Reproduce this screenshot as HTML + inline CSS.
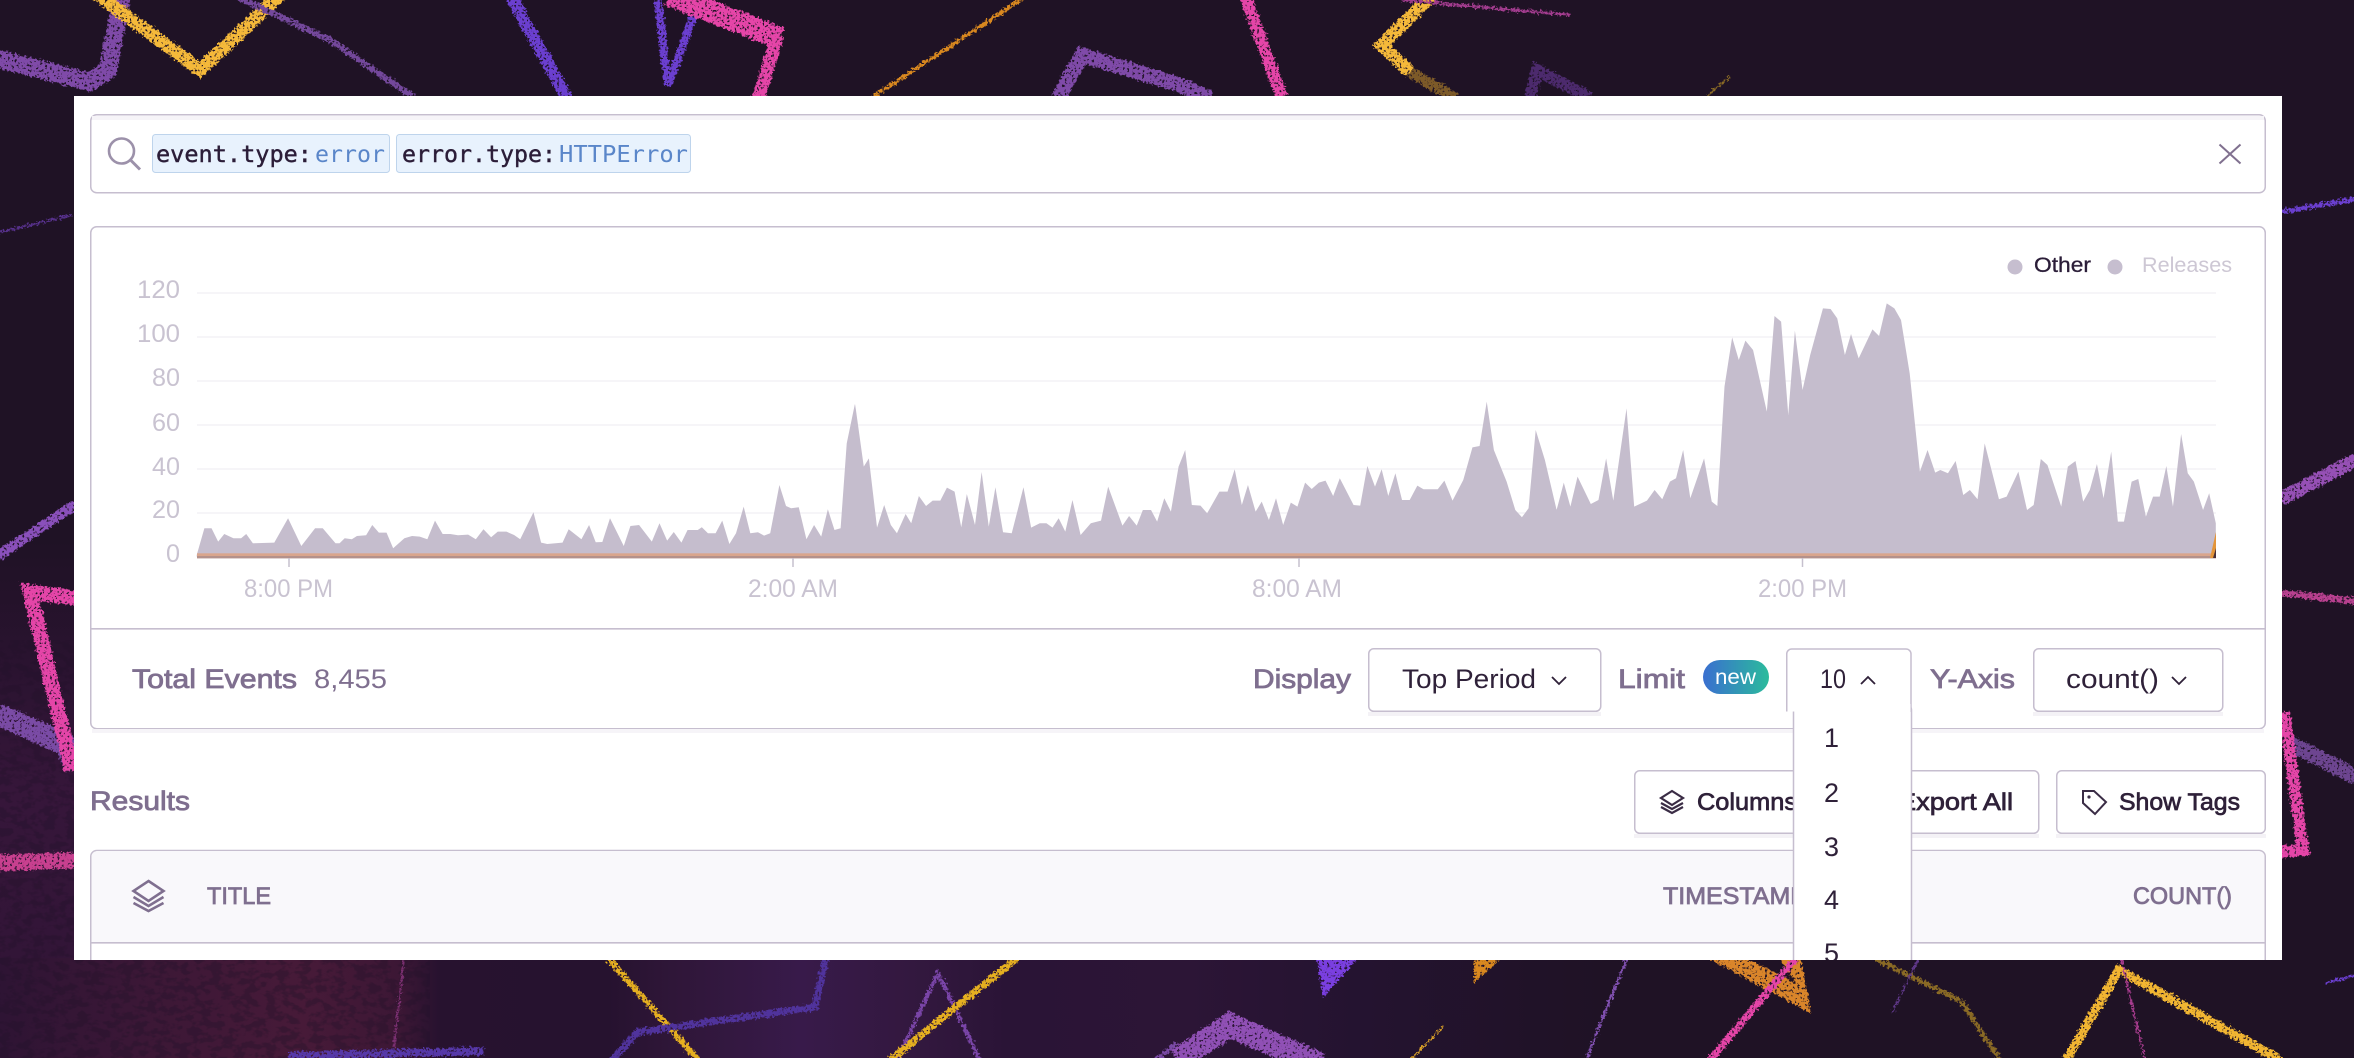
<!DOCTYPE html>
<html><head><meta charset="utf-8"><style>
html,body{margin:0;padding:0;background:#1f1225;width:2354px;height:1058px;overflow:hidden}
svg{display:block}
text{font-family:"Liberation Sans",sans-serif}
.m{font-family:"DejaVu Sans Mono","Liberation Mono",monospace;font-size:23px}
.d{stroke:#2b1d38;stroke-width:.4}
.lab{fill:#7f6f8f;stroke:#7f6f8f;stroke-width:.8;font-size:27px}
.val{fill:#2f2139;font-size:27px}
.btn{fill:#2f2139;stroke:#2f2139;stroke-width:.7;font-size:24px}
.ax{fill:#c9c3d1;font-size:25px}
.th{fill:#7f6f8f;stroke:#7f6f8f;stroke-width:.8;font-size:24px}
</style></head><body>
<svg width="2354" height="1058" viewBox="0 0 2354 1058" xmlns="http://www.w3.org/2000/svg">
<defs>
<filter id="rough" x="-5%" y="-5%" width="110%" height="110%" color-interpolation-filters="sRGB">
<feTurbulence type="fractalNoise" baseFrequency=".4" numOctaves="2" seed="4" result="n"/>
<feDisplacementMap in="SourceGraphic" in2="n" scale="7" xChannelSelector="R" yChannelSelector="G" result="d"/>
<feColorMatrix in="n" type="matrix" values="0 0 0 0 0  0 0 0 0 0  0 0 0 0 0  0 0 0 9 -2.7" result="mask"/>
<feComposite in="d" in2="mask" operator="in"/>
</filter>
<filter id="mottle" x="0" y="0" width="100%" height="100%" color-interpolation-filters="sRGB">
<feTurbulence type="fractalNoise" baseFrequency=".09 .14" numOctaves="3" seed="9"/>
<feColorMatrix type="matrix" values="0 0 0 0 .13  0 0 0 0 .07  0 0 0 0 .16  0 0 0 7 -3.2"/>
<feComposite in2="SourceGraphic" operator="in"/>
</filter>
<linearGradient id="hb" gradientUnits="userSpaceOnUse" x1="0" y1="0" x2="1600" y2="0">
<stop offset="0" stop-color="#2e1434"/><stop offset=".08" stop-color="#3a1736"/><stop offset=".19" stop-color="#471a38"/><stop offset=".25" stop-color="#3c1735"/><stop offset=".275" stop-color="#27122f"/><stop offset=".38" stop-color="#26122f"/><stop offset=".42" stop-color="#2f1638"/><stop offset=".5" stop-color="#381a4a"/><stop offset=".57" stop-color="#33183f"/><stop offset=".63" stop-color="#2a1436"/><stop offset=".74" stop-color="#2c1536"/><stop offset=".85" stop-color="#241330"/><stop offset="1" stop-color="#1f1225"/>
</linearGradient>
<linearGradient id="vl" x1="0" x2="0" y1="0" y2="1"><stop offset="0" stop-color="#1f1225"/><stop offset=".3" stop-color="#2a1330"/><stop offset=".6" stop-color="#36163a"/><stop offset="1" stop-color="#321537"/></linearGradient>
<linearGradient id="pill" x1="0" x2="1" y1="0" y2="0"><stop offset="0" stop-color="#3a6fd0"/><stop offset="1" stop-color="#2bbb9c"/></linearGradient>
</defs>

<rect width="2354" height="1058" fill="#1f1225"/>
<rect x="0" y="540" width="74" height="422" fill="url(#vl)"/>
<rect x="0" y="958" width="2354" height="100" fill="url(#hb)"/>
<rect x="0" y="640" width="430" height="418" fill="#000" filter="url(#mottle)" opacity=".35"/>

<g fill="none" stroke-linejoin="miter" filter="url(#rough)">
<polyline points="-5,58 90,82 108,70 122,-5" stroke="#7f4aa8" stroke-width="18"/>
<polyline points="98,-5 200,70 280,-5" stroke="#f5b93a" stroke-width="13"/>
<polyline points="233,-5 330,40 415,98" stroke="#74489c" stroke-width="6"/>
<polyline points="510,-5 567,98" stroke="#6b3fd0" stroke-width="12"/>
<polyline points="657,-5 668,85 695,12" stroke="#6b3fd0" stroke-width="8"/>
<polyline points="668,-5 780,38" stroke="#e545a8" stroke-width="22"/>
<polyline points="778,35 758,100" stroke="#e545a8" stroke-width="13"/>
<polyline points="1028,-5 871,98" stroke="#d9881f" stroke-width="4"/>
<polyline points="1058,98 1082,55 1177,84 1210,98" stroke="#7f4aa8" stroke-width="15"/>
<polyline points="1245,-5 1282,98" stroke="#e545a8" stroke-width="12"/>
<polyline points="1432,-5 1382,45 1410,72" stroke="#f5b93a" stroke-width="13"/>
<polyline points="1410,72 1455,98" stroke="#7d5a28" stroke-width="11"/>
<polyline points="1402,0 1571,15" stroke="#a33c8f" stroke-width="3"/>
<polyline points="1530,98 1537,70 1590,98" stroke="#4c2a6d" stroke-width="12"/>
<polyline points="1730,76 1705,98" stroke="#8a6a25" stroke-width="2"/>
<polyline points="2280,212 2356,199" stroke="#6b3fd0" stroke-width="5"/>
<polyline points="0,232 72,215" stroke="#56308a" stroke-width="2.500"/>
<polyline points="-2,556 76,504" stroke="#8a50bb" stroke-width="10"/>
<polyline points="2280,499 2356,460" stroke="#9650b5" stroke-width="14"/>
<polyline points="2280,593 2356,601" stroke="#b8408f" stroke-width="7"/>
<polyline points="-2,714 66,745 76,768" stroke="#7a4ba5" stroke-width="22"/>
<polyline points="76,598 30,592 72,770" stroke="#e545a8" stroke-width="15"/>
<polyline points="-2,863 76,860" stroke="#c8408f" stroke-width="16"/>
<polyline points="2287,742 2356,777" stroke="#6d4590" stroke-width="16"/>
<polyline points="2284,712 2303,850 2280,852" stroke="#e545a8" stroke-width="12"/>
<polygon points="1316,955 1361,955 1323,997" fill="#7a3fe0"/>
<polygon points="1474,955 1504,955 1474,983" fill="#d9881f"/>
<polyline points="1627,958 1586,1060" stroke="#8050b0" stroke-width="3"/>
<polygon points="1702,955 1811,1013 1800,955 1777,955 1796,983 1740,955" fill="#d9852a"/>
<polyline points="1796,958 1710,1060" stroke="#e545a8" stroke-width="7"/>
<polyline points="1875,958 1962,1002 2000,1060" stroke="#8a6a25" stroke-width="5"/>
<polyline points="1919,958 1892,1013" stroke="#60388a" stroke-width="2"/>
<polyline points="2066,1060 2119,970 2280,1060" stroke="#f2b632" stroke-width="9"/>
<polyline points="2121,958 2145,1060" stroke="#a83c8f" stroke-width="2"/>
<polyline points="1177,1060 1230,1025 1320,1065" stroke="#9050b5" stroke-width="24"/>
<polyline points="1443,1027 1410,1060" stroke="#d9a028" stroke-width="2"/>
<polyline points="2326,983 2356,975" stroke="#6b3fd0" stroke-width="2"/>
<polyline points="404,958 394,1047" stroke="#7a2f70" stroke-width="2"/>
<polyline points="289,1056 484,1051" stroke="#5638a8" stroke-width="8"/>
<polyline points="608,958 698,1060" stroke="#e6b020" stroke-width="6"/>
<polyline points="826,958 815,1007 638,1032 612,1060" stroke="#50339c" stroke-width="7"/>
<polyline points="897,1060 938,973 980,1060" stroke="#7a45a8" stroke-width="4"/>
<polyline points="1017,958 890,1060" stroke="#e6b020" stroke-width="7"/>
<polyline points="1156,1060 1177,1043" stroke="#7a4aa5" stroke-width="5"/>
</g>

<svg x="74" y="96" width="2208" height="864" viewBox="74 96 2208 864">
<rect x="74" y="96" width="2208" height="864" fill="#fff"/>

<!-- search -->
<rect x="90.750" y="114.750" width="2174.500" height="78" rx="6" fill="#fff" stroke="#c6becf" stroke-width="1.500"/>
<rect x="92" y="116" width="2172" height="4" fill="#f6f4f8"/>
<circle cx="121.500" cy="151" r="12.500" fill="none" stroke="#9c91aa" stroke-width="2.600"/>
<line x1="130.500" y1="160" x2="140" y2="169.500" stroke="#9c91aa" stroke-width="3"/>
<rect x="152.500" y="134.500" width="237" height="38" rx="3" fill="#e8f2fd" stroke="#bed4ec"/>
<rect x="396.500" y="134.500" width="294" height="38" rx="3" fill="#e8f2fd" stroke="#bed4ec"/>
<text class="m d" x="156" y="162" fill="#2b1d38" textLength="156" lengthAdjust="spacingAndGlyphs">event.type:</text>
<text class="m" x="315" y="162" fill="#5a86c9" textLength="70" lengthAdjust="spacingAndGlyphs">error</text>
<text class="m d" x="402" y="162" fill="#2b1d38" textLength="154" lengthAdjust="spacingAndGlyphs">error.type:</text>
<text class="m" x="559" y="162" fill="#5a86c9" textLength="129" lengthAdjust="spacingAndGlyphs">HTTPError</text>
<path d="M2219.500 144.500L2240.500 163.500M2240.500 144.500L2219.500 163.500" stroke="#80708f" stroke-width="2" fill="none"/>

<!-- chart box -->
<rect x="90.750" y="226.750" width="2174.500" height="502" rx="6" fill="#fff" stroke="#c6becf" stroke-width="1.500"/>
<rect x="92" y="729" width="2172" height="4" fill="#f6f4f8"/>
<line x1="91" y1="628.800" x2="2265" y2="628.800" stroke="#c6becf" stroke-width="1.600"/>

<g stroke="#f4f2f6" stroke-width="1.500">
<line x1="197" y1="293" x2="2216" y2="293"/><line x1="197" y1="337" x2="2216" y2="337"/>
<line x1="197" y1="381" x2="2216" y2="381"/><line x1="197" y1="425" x2="2216" y2="425"/>
<line x1="197" y1="469" x2="2216" y2="469"/><line x1="197" y1="513" x2="2216" y2="513"/>
</g>

<g fill="#c5bdcd">
<polygon transform="translate(60,260) scale(.5102,.3333)" points="268,890 268,885 283,805 297,805 310,845 322,822 340,835 355,835 365,822 378,850 420,848 447,775 473,858 500,805 515,805 540,850 548,850 558,835 572,838 582,828 600,826 612,795 625,818 640,818 653,865 675,835 690,828 705,830 720,838 735,782 750,822 765,822 780,826 800,824 815,838 830,808 845,832 858,815 875,815 890,825 902,838 928,757 943,848 955,852 985,848 997,808 1022,838 1037,795 1050,847 1063,846 1078,775 1105,858 1118,798 1135,795 1160,845 1175,790 1190,842 1203,816 1218,848 1230,810 1250,810 1258,802 1270,820 1285,820 1298,782 1312,852 1325,820 1340,740 1353,820 1368,817 1380,827 1392,820 1410,675 1423,738 1433,745 1448,742 1463,838 1478,795 1492,830 1505,748 1518,810 1530,805 1542,550 1558,432 1561,470 1561,890"/>
<polygon transform="translate(800,260) scale(.5102,.3333)" points="108,890 108,432 125,620 135,595 151,803 165,735 178,795 190,820 207,762 218,790 233,708 247,738 260,722 275,722 288,683 303,695 316,802 327,702 343,795 356,636 370,800 383,682 398,817 415,820 438,682 453,803 470,790 483,790 495,803 507,775 520,815 534,720 550,825 570,790 590,782 604,680 632,797 645,768 660,797 672,750 688,750 700,785 714,715 727,755 742,620 755,570 768,735 785,737 798,760 822,695 838,695 852,628 866,735 878,675 893,755 905,725 919,780 933,715 947,795 962,728 975,740 990,668 1003,687 1017,668 1030,662 1045,708 1058,655 1085,735 1098,737 1112,618 1127,680 1140,628 1153,708 1167,640 1180,720 1195,720 1210,677 1222,688 1250,688 1263,662 1279,722 1300,660 1318,562 1332,558 1346,425 1360,570 1385,665 1402,750 1415,772 1428,745 1442,510 1460,600 1483,750 1486,735 1486,890"/>
<polygon transform="translate(1550,260) scale(.5102,.3333)" points="13,890 13,750 27,668 40,740 54,650 80,732 95,720 110,595 124,722 150,445 165,740 190,722 205,690 220,718 235,665 247,655 261,570 275,715 302,595 317,725 328,738 342,380 357,232 370,300 383,242 398,270 425,455 440,168 453,185 467,465 480,212 495,390 510,285 535,145 550,147 563,175 578,285 590,222 605,295 632,208 645,228 660,130 675,145 688,180 705,340 725,635 740,570 755,638 765,630 780,640 795,603 810,705 823,690 838,718 852,550 880,718 895,710 918,635 935,750 948,735 962,597 975,615 1002,740 1015,620 1030,603 1045,725 1058,690 1072,612 1085,715 1100,575 1113,785 1125,785 1140,665 1153,657 1168,770 1182,710 1195,710 1208,618 1221,740 1237,522 1250,640 1262,665 1280,750 1292,700 1305,790 1305,890"/>
</g>
<rect x="197" y="553.300" width="2019" height="2.700" fill="#d9a58c"/>
<rect x="197" y="556" width="2019" height="2.400" fill="#b4918b"/>
<polygon points="2216,532 2216,558 2210,558" fill="#e3953a"/>
<polygon points="2216,548 2216,558 2213,558" fill="#4a3038"/>

<g stroke="#c6c0ce" stroke-width="1.500">
<line x1="289" y1="558" x2="289" y2="567"/><line x1="793" y1="558" x2="793" y2="567"/>
<line x1="1299" y1="558" x2="1299" y2="567"/><line x1="1802.500" y1="558" x2="1802.500" y2="567"/>
</g>
<text class="ax" x="137" y="298" textLength="43" lengthAdjust="spacingAndGlyphs">120</text>
<text class="ax" x="137" y="342" textLength="43" lengthAdjust="spacingAndGlyphs">100</text>
<text class="ax" x="152" y="386" textLength="28" lengthAdjust="spacingAndGlyphs">80</text>
<text class="ax" x="152" y="431" textLength="28" lengthAdjust="spacingAndGlyphs">60</text>
<text class="ax" x="152" y="475" textLength="28" lengthAdjust="spacingAndGlyphs">40</text>
<text class="ax" x="152" y="518" textLength="28" lengthAdjust="spacingAndGlyphs">20</text>
<text class="ax" x="166" y="562" textLength="14" lengthAdjust="spacingAndGlyphs">0</text>
<text class="ax" x="244" y="597" textLength="89" lengthAdjust="spacingAndGlyphs">8:00 PM</text>
<text class="ax" x="748" y="597" textLength="90" lengthAdjust="spacingAndGlyphs">2:00 AM</text>
<text class="ax" x="1252" y="597" textLength="90" lengthAdjust="spacingAndGlyphs">8:00 AM</text>
<text class="ax" x="1758" y="597" textLength="89" lengthAdjust="spacingAndGlyphs">2:00 PM</text>

<circle cx="2015" cy="267" r="7.500" fill="#c6becf"/>
<text x="2034" y="272" font-size="21" fill="#2b1d38" stroke="#2b1d38" stroke-width=".3" textLength="57" lengthAdjust="spacingAndGlyphs">Other</text>
<circle cx="2115" cy="267" r="7.500" fill="#c6becf"/>
<text x="2142" y="272" font-size="21" fill="#cdc7d4" textLength="90" lengthAdjust="spacingAndGlyphs">Releases</text>

<!-- footer -->
<text class="lab" x="132" y="688" textLength="165" lengthAdjust="spacingAndGlyphs">Total Events</text>
<text x="314" y="688" font-size="27" fill="#7f6f8f" textLength="73" lengthAdjust="spacingAndGlyphs">8,455</text>
<text class="lab" x="1253" y="688" textLength="98" lengthAdjust="spacingAndGlyphs">Display</text>

<rect x="1368" y="712" width="233" height="4" fill="#f4f2f6"/>
<rect x="1368.750" y="648.750" width="232" height="62.500" rx="5" fill="#fff" stroke="#c6becf" stroke-width="1.500"/>
<text class="val" x="1402" y="688" textLength="134" lengthAdjust="spacingAndGlyphs">Top Period</text>
<path d="M1552 677l7 7 7-7" fill="none" stroke="#2f2139" stroke-width="1.800"/>

<text class="lab" x="1618" y="688" textLength="67" lengthAdjust="spacingAndGlyphs">Limit</text>
<rect x="1703" y="660" width="66" height="34" rx="17" fill="url(#pill)"/>
<text x="1715" y="684" font-size="21" fill="#fff" textLength="41" lengthAdjust="spacingAndGlyphs">new</text>

<text class="lab" x="1930" y="688" textLength="85" lengthAdjust="spacingAndGlyphs">Y-Axis</text>
<rect x="2033" y="712" width="190" height="4" fill="#f4f2f6"/>
<rect x="2033.750" y="648.750" width="189" height="62.500" rx="5" fill="#fff" stroke="#c6becf" stroke-width="1.500"/>
<text class="val" x="2066" y="688" textLength="93" lengthAdjust="spacingAndGlyphs">count()</text>
<path d="M2172 677l7 7 7-7" fill="none" stroke="#2f2139" stroke-width="1.800"/>

<!-- results -->
<text class="lab" x="90" y="810" textLength="100" lengthAdjust="spacingAndGlyphs">Results</text>

<rect x="1634" y="834" width="224" height="4" fill="#f4f2f6"/>
<rect x="1634.750" y="770.750" width="224" height="62.500" rx="5" fill="#fff" stroke="#c6becf" stroke-width="1.500"/>
<rect x="1817" y="834" width="222" height="4" fill="#f4f2f6"/>
<rect x="1817.750" y="770.750" width="221" height="62.500" rx="5" fill="#fff" stroke="#c6becf" stroke-width="1.500"/>
<rect x="2056" y="834" width="210" height="4" fill="#f4f2f6"/>
<rect x="2056.750" y="770.750" width="208.500" height="62.500" rx="5" fill="#fff" stroke="#c6becf" stroke-width="1.500"/>

<g fill="none" stroke="#3a2c45" stroke-width="2.200">
<path d="M1672 791l11 7-11 7-11-7z"/><path d="M1661 803l11 6 11-6"/><path d="M1661 807l11 6 11-6"/>
</g>
<text class="btn" x="1697" y="810" textLength="100" lengthAdjust="spacingAndGlyphs">Columns</text>
<text class="btn" x="1898" y="810" textLength="115" lengthAdjust="spacingAndGlyphs">Export All</text>
<path d="M2083 791h11l12 11-11 12-12-11z" fill="none" stroke="#3a2c45" stroke-width="2"/>
<circle cx="2089" cy="797" r="1.600" fill="#3a2c45"/>
<text class="btn" x="2119" y="810" textLength="121" lengthAdjust="spacingAndGlyphs">Show Tags</text>

<!-- table -->
<path d="M90.750 961V856.500a6 6 0 0 1 6-6H2259.250a6 6 0 0 1 6 6V961" fill="#fff" stroke="#c6becf" stroke-width="1.500"/>
<path d="M91.500 942V857a6 6 0 0 1 6-6H2258.500a6 6 0 0 1 6 6V942z" fill="#f9f8fb"/>
<line x1="91" y1="942.800" x2="2265" y2="942.800" stroke="#c6becf" stroke-width="1.600"/>
<g fill="none" stroke="#7f6f8f" stroke-width="2.600">
<path d="M148.500 881l15 10-15 10-15-10z"/><path d="M133.500 897l15 9 15-9"/><path d="M133.500 903l15 8 15-8"/>
</g>
<text class="th" x="207" y="904" textLength="64" lengthAdjust="spacingAndGlyphs">TITLE</text>
<text class="th" x="1663" y="904" textLength="144" lengthAdjust="spacingAndGlyphs">TIMESTAMP</text>
<text class="th" x="2133" y="904" textLength="99" lengthAdjust="spacingAndGlyphs">COUNT()</text>

<!-- limit button + dropdown -->
<rect x="1793.500" y="705" width="118" height="270" rx="5" fill="#fff" stroke="#c6becf" stroke-width="1.500"/>
<path d="M1786.750 711.500V654a5 5 0 0 1 5-5H1906a5 5 0 0 1 5 5V712" fill="#fff" stroke="#c6becf" stroke-width="1.500"/>
<rect x="1794.500" y="704" width="116" height="12" fill="#fff"/>
<text class="val" x="1820" y="688" textLength="26" lengthAdjust="spacingAndGlyphs">10</text>
<path d="M1861 684l7-7 7 7" fill="none" stroke="#2f2139" stroke-width="1.800"/>
<text class="val" x="1824" y="747">1</text>
<text class="val" x="1824" y="802">2</text>
<text class="val" x="1824" y="856">3</text>
<text class="val" x="1824" y="909">4</text>
<text class="val" x="1824" y="962">5</text>
</svg>
</svg>
</body></html>
